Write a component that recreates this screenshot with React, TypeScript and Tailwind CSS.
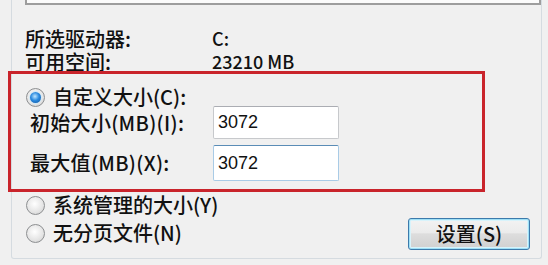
import type { ReactNode } from "react";

const CJK = "font-['Noto_Sans_CJK_SC','Noto_Sans',sans-serif]";

function Radio({ checked, children }: { checked?: boolean; children: ReactNode }) {
  return (
    <div className="flex h-[20px] items-center">
      <span className="ml-[1px] flex h-[19px] w-[19px] items-center justify-center rounded-full border border-[#8d8f91] bg-[radial-gradient(circle_at_45%_40%,#ffffff,#e4e4e4_60%,#c9c9c9)]">
        {checked && (
          <span className="h-[11px] w-[11px] rounded-full bg-[radial-gradient(circle_at_45%_40%,#bfe6ff,#2b8be0_45%,#0d4f99)] shadow-[0_0_0_1px_#cfe8f7]" />
        )}
      </span>
      <span className="ml-[8px] text-[20px] leading-[20px] text-[#111]">{children}</span>
    </div>
  );
}

function Field({ label, value, focused, height }: { label: string; value: string; focused?: boolean; height: string }) {
  return (
    <div className={`flex items-center ${height}`}>
      <span className="ml-[5px] w-[183px] text-[20px] leading-[22px] tracking-[0.3px] text-[#111]">{label}</span>
      <div
        className={`flex h-full w-[126px] items-center rounded-[2px] border bg-white pl-[4px] font-['Liberation_Sans',Arial,sans-serif] text-[18px] text-[#111] ${
          focused ? "border-[#a9cbe6] border-t-[#5a8cb6]" : "border-[#c7c9cc] border-t-[#abadb3]"
        }`}
      >
        {value}
      </div>
    </div>
  );
}

export default function App() {
  return (
    <div className={`relative h-[265px] w-[548px] overflow-hidden bg-[#f0f0f0] font-medium ${CJK}`}>
      <div className="ml-[11px] h-[259px] w-[531px] rounded-b-[3px] border-x border-b border-[#d5dbe0] pl-[13px]">
        <div className="h-[5px] w-[516px] border-x-2 border-b-2 border-[#9d9d9d] bg-[#fbfbfb]" />

        <div className="mt-[22px] grid grid-cols-[187px_1fr] leading-[23px] text-[#111]">
          <span className="text-[20px]">所选驱动器:</span>
          <span className="text-[18px]">C:</span>
          <span className="text-[20px]">可用空间:</span>
          <span className="text-[18px]">23210 MB</span>
        </div>

        <div className="mt-[14px]">
          <Radio checked>自定义大小(C):</Radio>
        </div>
        <div className="-mt-[1px]">
          <Field label="初始大小(MB)(I):" value="3072" height="h-[33px]" />
        </div>
        <div className="mt-[6px]">
          <Field label="最大值(MB)(X):" value="3072" focused height="h-[36px]" />
        </div>

        <div className="mt-[14px] flex justify-between">
          <div className="flex flex-col gap-[8px]">
            <Radio>系统管理的大小(Y)</Radio>
            <Radio>无分页文件(N)</Radio>
          </div>
          <button className="mr-[11px] mt-[23px] flex h-[32px] w-[122px] items-center justify-center rounded-[3px] border border-[#3c7aab] bg-[linear-gradient(#f3f3f3,#ebebeb_45%,#dddddd_50%,#d0d0d0)] text-[20px] leading-[20px] text-[#111] shadow-[inset_0_0_0_1px_#9fe0f6,inset_0_0_0_2px_#d8f3fb]">
            设置(S)
          </button>
        </div>
      </div>

      <div className="pointer-events-none absolute left-[8px] top-[71px] h-[121px] w-[477px] border-[3px] border-[#c9242b]" />
    </div>
  );
}
